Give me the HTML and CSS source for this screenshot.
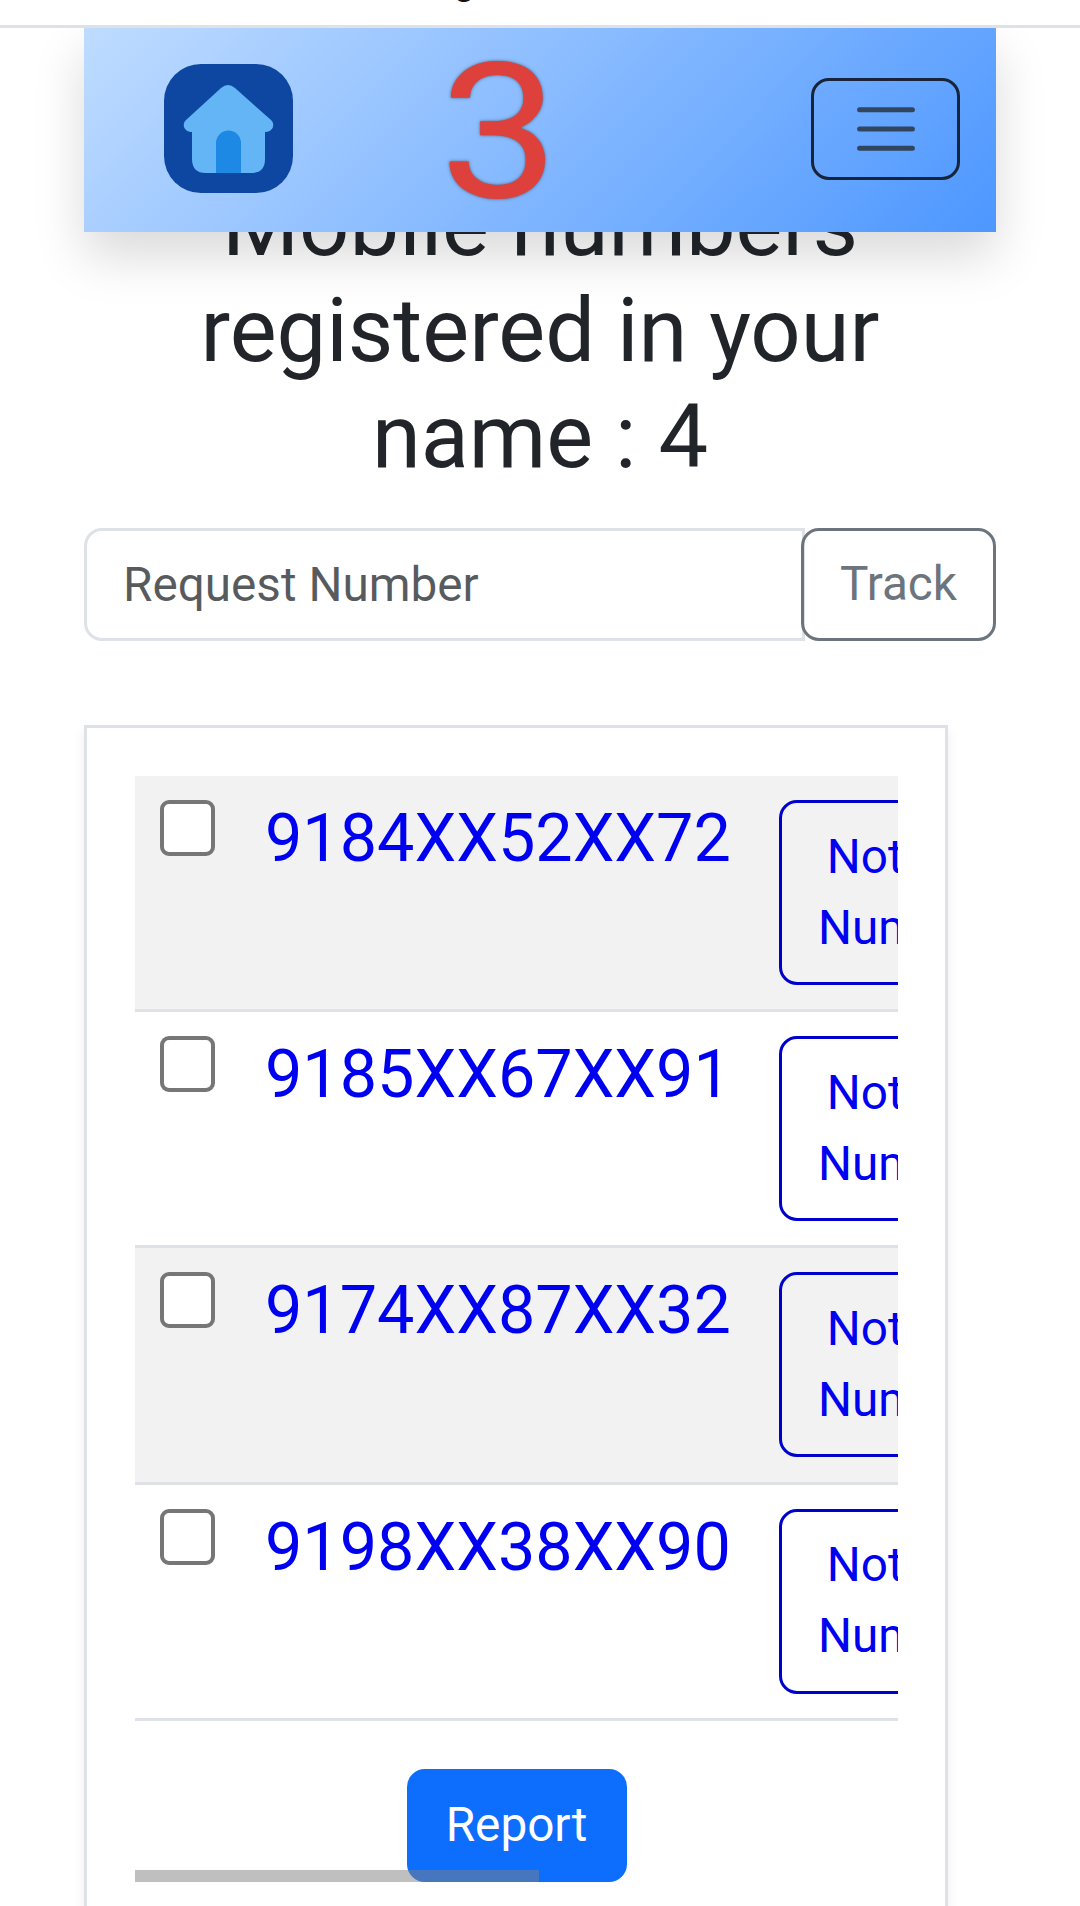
FILE: index.html
```
<!DOCTYPE html>
<html lang="en">
<head>
    <meta charset="UTF-8">
    <meta name="viewport" content="width=device-width, initial-scale=1.0">
    <title>Mobile numbers</title>
    <link rel="stylesheet" href="styles.css">
</head>
<body>
    <header class="topbar"><span class="topbar-text">g</span></header>

    <div class="container">
        <nav class="navbar">
            <a class="home">
                <svg viewBox="0 0 129 129">
                    <rect width="129" height="129" rx="37" fill="#0d47a1"/>
                    <path d="M28 60h73v35q0 14-14 14H42q-14 0-14-14z" fill="#64b5f6"/>
                    <path d="M57 24q7-6 14 0l36 32c5 5 1 12-5 12H27c-6 0-10-7-5-12z" fill="#64b5f6"/>
                    <path d="M52 109V79a12.5 12.5 0 0 1 25 0v30z" fill="#1e88e5"/>
                </svg>
            </a>
            <span class="step">3</span>
            <button class="toggler">
                <svg viewBox="0 0 30 30">
                    <path stroke="rgba(33, 37, 41, 0.75)" stroke-linecap="round" stroke-width="2.1" d="M4 7h22M4 15h22M4 23h22"/>
                </svg>
            </button>
        </nav>

        <h2>Mobile numbers registered in your name : 4</h2>

        <form class="input-group">
            <input type="text" class="form-control" placeholder="Request Number">
            <button type="button" class="btn btn-track">Track</button>
        </form>

        <div class="card">
            <div class="table-responsive">
                <div class="table-row">
                    <input type="checkbox" class="check">
                    <span class="number">9184XX52XX72</span>
                    <button class="btn btn-not">Not My<br>Number</button>
                </div>
                <div class="table-row">
                    <input type="checkbox" class="check">
                    <span class="number">9185XX67XX91</span>
                    <button class="btn btn-not">Not My<br>Number</button>
                </div>
                <div class="table-row">
                    <input type="checkbox" class="check">
                    <span class="number">9174XX87XX32</span>
                    <button class="btn btn-not">Not My<br>Number</button>
                </div>
                <div class="table-row">
                    <input type="checkbox" class="check">
                    <span class="number">9198XX38XX90</span>
                    <button class="btn btn-not">Not My<br>Number</button>
                </div>
                <div class="actions">
                    <button class="btn btn-report">Report</button>
                </div>
                <div class="scroll-thumb"></div>
            </div>
        </div>
    </div>
</body>
</html>
```
FILE: styles.css
```
* {
    box-sizing: border-box;
}

body {
    margin: 0;
    height: 1906px;
    overflow: hidden;
    background-color: #fff;
    color: #212529;
    font-family: Roboto, sans-serif;
    font-size: 47.7px;
    line-height: 71px;
}

.topbar {
    position: relative;
    z-index: 3;
    height: 28px;
    padding-left: 453px;
    background-color: #fff;
    border-bottom: 3px solid #dee2e6;
    overflow: hidden;
}

.topbar-text {
    display: block;
    margin-top: -39px;
    font-size: 40px;
    line-height: 40px;
    color: #111;
}

.container {
    padding: 0 84px;
}

.navbar {
    position: relative;
    z-index: 2;
    display: flex;
    align-items: center;
    height: 204px;
    padding: 0 36px 3px 80px;
    background: linear-gradient(135deg, #bfdcff, #4d97ff);
    box-shadow: 0 24px 48px rgba(0, 0, 0, 0.15);
}

.home svg {
    display: block;
    width: 129px;
    height: 129px;
}

.step {
    margin: 9px 0 0 153px;
    font-size: 189px;
    line-height: 204px;
    color: #de403b;
    text-shadow: 0 0 3px rgba(60, 60, 60, 0.8);
    transform: scaleX(1.12);
}

.toggler {
    display: flex;
    align-items: center;
    justify-content: center;
    width: 149px;
    height: 102px;
    margin-left: auto;
    padding: 0;
    background: none;
    border: 3px solid #17243a;
    border-radius: 18px;
}

.toggler svg {
    width: 72px;
    height: 72px;
    fill: none;
}

h2 {
    margin: -60px 0 0;
    padding: 0 60px;
    text-align: center;
    font-size: 88.4px;
    font-weight: 400;
    line-height: 106px;
}

.input-group {
    display: flex;
    margin-top: 38px;
}

.form-control {
    flex: 1;
    min-width: 0;
    height: 113px;
    padding: 0 36px;
    background-color: #fff;
    border: 3px solid #dee2e6;
    border-radius: 18px 0 0 18px;
    font: inherit;
}

.form-control::placeholder {
    color: rgba(33, 37, 41, 0.75);
    opacity: 1;
}

.btn {
    height: 113px;
    padding: 0 36px;
    background: none;
    border: 3px solid;
    border-radius: 18px;
    font: inherit;
    text-align: center;
}

.btn-track {
    width: 195px;
    margin-left: -4px;
    color: #6c757d;
    border-color: #6c757d;
}

.card {
    width: 864px;
    height: 1181px;
    margin-top: 84px;
    padding: 48px 48px 0;
    border: 3px solid #dee2e6;
    border-bottom: none;
    box-shadow: 0 6px 12px rgba(0, 0, 0, 0.075);
}

.table-responsive {
    position: relative;
    width: 763px;
    height: 1106px;
    overflow: hidden;
}

.table-row {
    display: flex;
    align-items: flex-start;
    width: 1040px;
    height: 236.2px;
    padding: 24px 25px;
    border-bottom: 3px solid #dee2e6;
}

.table-row:nth-child(odd) {
    background-color: #f2f2f2;
}

.check {
    flex: none;
    appearance: none;
    width: 55px;
    height: 56px;
    margin: 0;
    background-color: #fff;
    border: 4px solid #767676;
    border-radius: 9px;
}

.number {
    width: 514px;
    margin-left: 50px;
    font-size: 66.5px;
    line-height: 77px;
    color: #0000f0;
}

.btn-not {
    flex: none;
    height: 185px;
    color: #0000f0;
    border-color: #0000cd;
}

.actions {
    padding-top: 48px;
    text-align: center;
}

.btn-report {
    width: 220px;
    color: #fff;
    background-color: #0d6efd;
    border-color: #0d6efd;
}

/* horizontal scroll indicator, over the report button */
.scroll-thumb {
    position: absolute;
    left: 0;
    bottom: 0;
    width: 404px;
    height: 12px;
    background-color: rgba(128, 128, 128, 0.5);
}
```
